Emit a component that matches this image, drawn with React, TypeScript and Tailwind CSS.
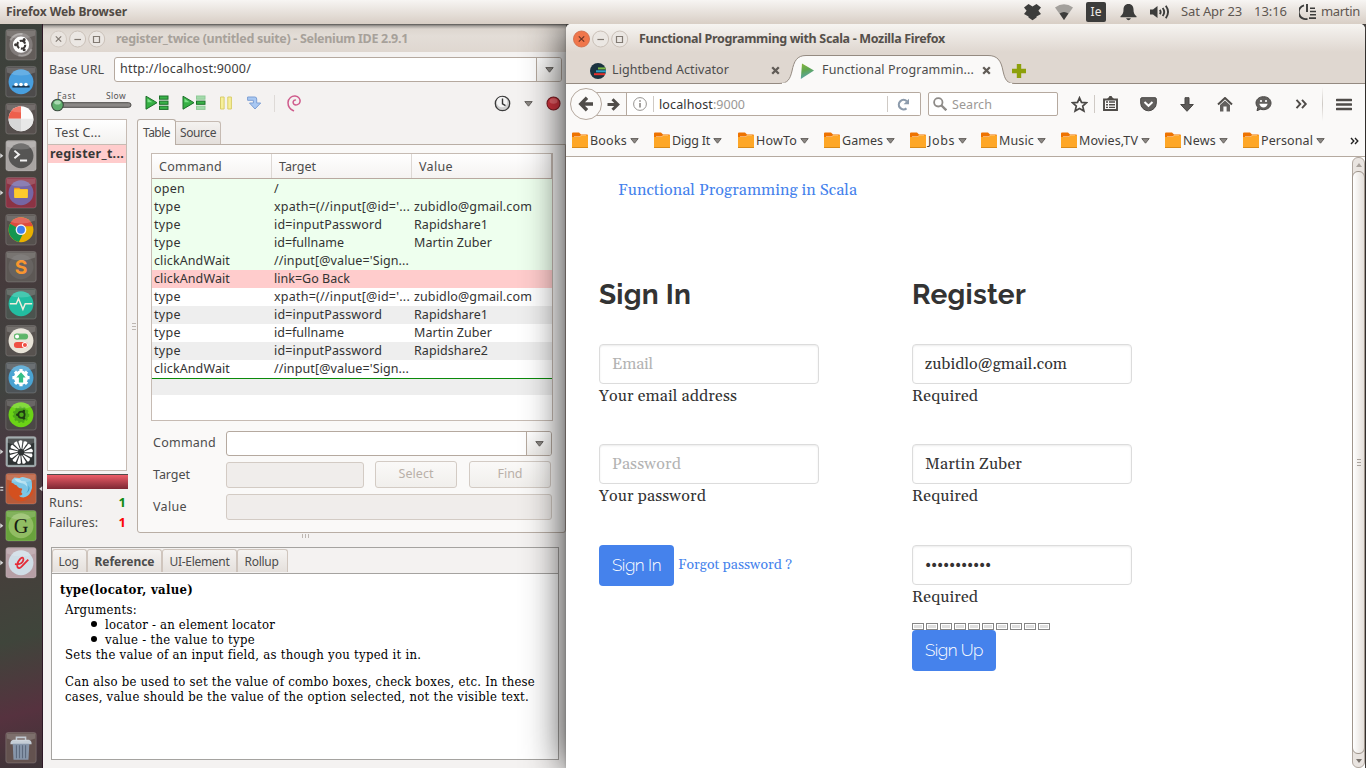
import React, { useLayoutEffect, useRef, useState } from "react";

const ui = "font-['Noto_Sans','Open_Sans',sans-serif]";

/* Text whose tracking is adjusted so that the run takes a known width. */
function Fit({ w, children, className = "" }: { w: number; children: string; className?: string }) {
  const ref = useRef<HTMLSpanElement>(null);
  const [ls, setLs] = useState(0);
  useLayoutEffect(() => {
    if (ref.current) {
      const natural = ref.current.getBoundingClientRect().width - ls * children.length;
      setLs((w - natural) / children.length);
    }
  }, [w, children]);
  return (
    <span ref={ref} style={{ letterSpacing: ls }} className={"inline-block shrink-0 whitespace-pre " + className}>
      {children}
    </span>
  );
}

function Caret({ className = "" }: { className?: string }) {
  return (
    <svg width="9" height="6" viewBox="0 0 9 6" className={"shrink-0 " + className}>
      <path d="M.8.6h7.4L4.5 5.2z" fill="#8d8985" stroke="#5a5754" strokeWidth=".9" />
    </svg>
  );
}

/* ---------- top panel ---------- */
function TopPanel() {
  return (
    <header className="flex h-6 shrink-0 items-center bg-linear-to-b from-[#f7f5f3] to-[#d8cec5] text-[13px] leading-6 text-[#5f5751]">
      <Fit w={121} className="ml-1.5 text-[12px] font-bold text-[#524b45]">Firefox Web Browser</Fit>
      <svg width="19" height="18" viewBox="0 0 19 18" className="ml-[896px]" fill="#3c3c3b">
        <path d="M5.500 1 9.500 3.600 13.500 1 18 4.400 15.400 7.700 18 11 13.500 13.600v1L9.500 17.300 5.500 14.600v-1L1 11 3.600 7.700 1 4.400z" />
      </svg>
      <svg width="20" height="18" viewBox="0 0 20 18" className="ml-[12px]">
        <path d="M1 4.600Q10-2.200 19 4.600L10 17z" fill="#a3a09c" />
        <path d="M5.600 10.600Q10 7.600 14.400 10.600L10 17z" fill="#3c3c3b" />
      </svg>
      <span className="ml-[12px] flex h-5 w-5 items-center justify-center rounded-[2px] bg-[#3c3c3b] text-[12px] text-[#eeeae6]">Ie</span>
      <svg width="17" height="18" viewBox="0 0 17 18" className="ml-[14px]" fill="#3c3c3b">
        <path d="M8.500 1c3.600 0 5 2.600 5 5.500 0 3.500.8 4.800 3 6.800v.9H.5v-.9c2.200-2 3-3.300 3-6.800C3.500 3.600 4.900 1 8.500 1z" />
        <path d="M6 15.200h5q-2.500 4-5 0z" />
      </svg>
      <svg width="22" height="16" viewBox="0 0 22 16" className="ml-[12px]" fill="none" stroke="#3c3c3b" strokeWidth="1.900">
        <path d="M1 5.500h3L8.500 2v12L4 10.500H1z" fill="#3c3c3b" stroke="none" />
        <path d="M10.800 5.800q1.700 2.200 0 4.400M13.700 4q3 4 0 8M16.800 1.800q4.500 6.200 0 12.400" />
      </svg>
      <Fit w={61} className="ml-[10px] -mt-[2px]">Sat Apr 23</Fit>
      <Fit w={33} className="ml-[12px] -mt-[2px]">13:16</Fit>
      <svg width="18" height="18" viewBox="0 0 18 18" className="ml-[12px]" fill="none" stroke="#3c3c3b" strokeWidth="1.900">
        <path d="M5 2.300A7 7 0 0 0 8.500 15.900M8 1v8" />
        <path d="M11 5.200h5M11 8.500h6M11 11.800h6M10 15.100h7" strokeWidth="1.600" />
      </svg>
      <Fit w={39} className="ml-[4px] -mt-[2px]">martin</Fit>
    </header>
  );
}

/* ---------- launcher ---------- */
function Gloss() {
  return <path d="M1.500 1.500h28v5q-14 6-28 0z" fill="#fff" opacity=".17" />;
}

const icons: { bg: string; arrow?: string; art: React.ReactNode }[] = [
  { bg: "#635d5a", art: (<>
    <circle cx="15.500" cy="15.500" r="11.500" fill="#8e8987" opacity=".7" />
    <path d="M5 11Q9 4 17 5M26 20q-4 8-13 6" stroke="#bdb9b7" strokeWidth="2" fill="none" opacity=".6" />
    <circle cx="15.500" cy="15.500" r="8" fill="#fff" />
    <circle cx="15.800" cy="15.500" r="3.900" fill="none" stroke="#3b3736" strokeWidth="2.100" strokeDasharray="6.400 1.770" />
    <circle cx="10.200" cy="15.500" r="1.500" fill="#3b3736" /><circle cx="18.600" cy="10.500" r="1.500" fill="#3b3736" /><circle cx="18.600" cy="20.500" r="1.500" fill="#3b3736" /></>) },
  { bg: "#4d4b4b", art: (<><circle cx="15.500" cy="15.500" r="12.300" fill="#489fdf" />
    <path d="M7 20.300h17" stroke="#1d3850" strokeWidth="2" />
    <g fill="#fff"><circle cx="10.600" cy="18.300" r="1.800" /><circle cx="15.500" cy="18.300" r="1.800" /><circle cx="20.400" cy="18.300" r="1.800" /></g></>) },
  { bg: "#57504e", art: (<><circle cx="15.500" cy="15.500" r="12.300" fill="#fbfbfb" />
    <path d="M15.500 15.500H3.200a12.300 12.300 0 0 1 12.300-12.300z" fill="#ee5f4c" />
    <path d="M15.500 15.500H3.200a12.300 12.300 0 0 0 12.300 12.300z" fill="#d7d7d7" />
    <path d="M15.500 15.500h12.300a12.300 12.300 0 0 1-12.300 12.300z" fill="#e8e8e8" /></>) },
  { bg: "#a8a4a2", arrow: "l", art: (<><circle cx="15.500" cy="15.500" r="12.300" fill="#565554" />
    <path d="M9 10.500l4.500 3.800L9 18.100M14.500 20.200h7" fill="none" stroke="#f2f2f2" strokeWidth="1.900" /></>) },
  { bg: "#8b3344", arrow: "l", art: (<><circle cx="15.500" cy="15.500" r="12.300" fill="#7566a4" />
    <path d="M8.700 10.500h5l1.500 1.700h7v3H8.700z" fill="#f39c1e" /><rect x="8.700" y="12" width="13.600" height="8.700" rx=".8" fill="#fecb2b" /></>) },
  { bg: "#55504d", art: (<><circle cx="15.500" cy="15.500" r="12.300" fill="#e8b000" />
    <path d="M15.500 15.500 4.600 9.800A12.300 12.300 0 0 1 27.200 12H15.500z" fill="#dd4b3e" />
    <path d="M15.500 15.500 4.700 9.600A12.300 12.300 0 0 0 13.400 27.600l5.200-10.300z" fill="#14964f" />
    <circle cx="15.500" cy="15.500" r="5.300" fill="#f4f4f4" /><circle cx="15.500" cy="15.500" r="3.900" fill="#3f80ee" /></>) },
  { bg: "#5d5855", art: (<><circle cx="15.500" cy="15.500" r="12.300" fill="#676361" />
    <text x="15.500" y="22.300" textAnchor="middle" fontSize="19" fontWeight="700" fill="#f8952f" fontFamily="Inter">S</text></>) },
  { bg: "#4b534e", art: (<><circle cx="15.500" cy="15.500" r="12.300" fill="#22bda1" />
    <path d="M4.500 15.500h6.300l2.200-5 4.400 10.600 2.300-5.600h6.800" fill="none" stroke="#f0eddc" strokeWidth="1.400" /></>) },
  { bg: "#57524f", art: (<><circle cx="15.500" cy="15.500" r="12.300" fill="#e8e4d8" />
    <rect x="8.500" y="8.300" width="14" height="6" rx="3" fill="#5db568" /><circle cx="11.600" cy="11.300" r="2.500" fill="#fff" stroke="#5db568" />
    <rect x="8.500" y="16.700" width="14" height="6" rx="3" fill="#ef5044" /><circle cx="19.400" cy="19.700" r="2.500" fill="#ef5044" stroke="#fff" /></>) },
  { bg: "#4d5357", art: (<><circle cx="15.500" cy="15.500" r="12.300" fill="#4aa3d2" />
    <g stroke="#fff" strokeWidth="3.200"><path d="M15.500 7v17M7 15.500h17M9.500 9.500l12 12M21.500 9.500l-12 12" /></g><circle cx="15.500" cy="15.500" r="7" fill="#fff" />
    <path d="M15.500 10.200l4.600 5h-2.500v5h-4.200v-5h-2.500z" fill="#35bf87" /></>) },
  { bg: "#4b4846", art: (<><circle cx="15.500" cy="15.500" r="12.300" fill="#6bd316" />
    <circle cx="15.500" cy="15.500" r="7.200" fill="#4ca71a" stroke="#4ca71a" strokeWidth="2" strokeDasharray="2 2" />
    <circle cx="16" cy="15.500" r="3.100" fill="none" stroke="#1e3b12" strokeWidth="1.700" />
    <g fill="#1e3b12"><circle cx="11.900" cy="15.500" r="1.300" /><circle cx="18.300" cy="11.900" r="1.300" /><circle cx="18.300" cy="19.100" r="1.300" /></g></>) },
  { bg: "#9aa5a7", arrow: "l", art: (<><rect x="2.500" y="2.500" width="26" height="26" fill="#2f3334" />
    <g fill="#fff">{[0, 1, 2, 3, 4, 5, 6, 7, 8, 9, 10, 11, 12].map((i) => (
      <path key={i} d="M15.200 12.500 13 5.500q2-2.300 3.800-.7l-.8 8z" transform={"rotate(" + i * 27.7 + " 15.5 16)"} />
    ))}</g><circle cx="15.500" cy="16" r="2.500" fill="#2f3334" /></>) },
  { bg: "#b85a39", arrow: "b", art: (<><circle cx="15.500" cy="15.500" r="12.300" fill="#d4501f" />
    <path d="M6 9.500Q6.500 6 9 4.500L14 5q3-2 5.500-.5l5 1.500q2 1.500 1.800 4 .7 4.500-1 8-2 5.300-7.500 6.300-3.300 0-4.300-1.800 2.600 0 3.500-1.700-2-1.300-1-3.300 1-1.300.5-2.200-3 .2-4.300-1.600l-1.200-1.600q-2-.2-2.500-1.600z" fill="#7cc6e6" />
    <path d="M9 6q5-1 7 2l4 .5q2 2 1.500 5Q19 10 16 10q-4 0-7-4z" fill="#b4e0f0" />
    <path d="M20.500 20q2.800-3 2.500-8 2.500 5-2.500 8z" fill="#3f9cc6" /></>) },
  { bg: "#69a33c", arrow: "l", art: (<><circle cx="15.500" cy="15.500" r="12.300" fill="#91bd63" />
    <text x="15.500" y="22.300" textAnchor="middle" fontSize="20" fill="#171c12" fontFamily="Liberation Serif">G</text></>) },
  { bg: "#b69fa5", arrow: "l", art: (<><circle cx="15.500" cy="15.500" r="12.300" fill="#cfdde6" />
    <path d="M9.500 17q7.500.8 8.400-4.500 0-3.500-3.200-.8-3.800 4.500-2.700 8 1.500 2.600 4.500-.7l6.200-6.500" fill="none" stroke="#e42c38" strokeWidth="1.800" /></>) },
  { bg: "#63524f", art: (<>
    <path d="M11 8V5.300h9V8" fill="none" stroke="#b6bfc9" strokeWidth="1.500" />
    <path d="M5 12q0-4 3-4.300h15q3 .3 3 4.300z" fill="#c4cdd6" /><path d="M7.300 11.500h16.400l-.8 16H8.100z" fill="#8796aa" />
    <path d="M11 13v13M14 13v13M17 13v13M20 13v13" stroke="#5e6b7f" strokeWidth="1.100" /></>) },
];

function Launcher() {
  return (
    <nav className="flex w-[43px] shrink-0 flex-col gap-1.5 border-r border-[#2e1826] bg-[linear-gradient(165deg,#3a403a_0%,#47443f_20%,#46393b_32%,#404440_48%,#4b3842_58%,#463f3b_72%,#3f453b_82%,#56323f_92%,#3d3437_100%)] pb-[5px] pl-[5px] pt-[5px]">
      {icons.map((ic, i) => (
        <div key={i} className={"h-[31px] w-[32px] shrink-0 " + (i === 15 ? "mt-auto" : "")}>
          <svg width="32" height="32" viewBox="-.3 0 31.600 31.600" className="block overflow-visible">
            <rect x=".5" y=".5" width="30" height="30" rx="2.500" fill={ic.bg} stroke="#ffffff" strokeOpacity=".16" />
            {ic.art}
            <Gloss />
            {ic.arrow === "l" && <path d="M-5 13v5l3-2.500z" fill="#d8d8d8" />}
            {ic.arrow === "b" && <path d="M-5 13.500h3v1.200h-3zM-5 16.300h3v1.200h-3zM36.500 13v5l-3-2.500z" fill="#d8d8d8" />}
          </svg>
        </div>
      ))}
    </nav>
  );
}

/* ---------- window buttons ---------- */
function WinButtons({ active }: { active?: boolean }) {
  const s = "#817a73";
  return (
    <svg width="56" height="18" viewBox="0 0 56 18" className="ml-px mt-px shrink-0" fill="none" stroke={s} strokeWidth="1.200">
      <circle cx="8.500" cy="9" r="8" fill={active ? "#f0764b" : "#e9e4df"} stroke={active ? "#cf7150" : "#cfc6be"} strokeWidth=".9" />
      <circle cx="27.600" cy="9" r="8" fill="#ebe7e3" stroke="#c6bcb3" strokeWidth=".9" />
      <circle cx="46.700" cy="9" r="8" fill="#ebe7e3" stroke="#c6bcb3" strokeWidth=".9" />
      <path d="M5.800 6.300l5.400 5.400m0-5.400-5.400 5.400" stroke={active ? "#6b3526" : s} />
      <path d="M24.400 9.500h6.600" />
      <path d="M43.500 6.500h6v6h-6z" />
    </svg>
  );
}

/* ---------- Selenium window ---------- */
const steps: [string, string, number, string, number, number, string][] = [
  ["open", "/", 31, "", 5, 0, "bg-[#eeffee]"],
  ["type", "xpath=(//input[@id='...", 27, "zubidlo@gmail.com", 136, 118, "bg-[#eeffee]"],
  ["type", "id=inputPassword", 27, "Rapidshare1", 108, 74, "bg-[#eeffee]"],
  ["type", "id=fullname", 27, "Martin Zuber", 70, 78, "bg-[#eeffee]"],
  ["clickAndWait", "//input[@value='Sign...", 76, "", 135, 0, "bg-[#eeffee]"],
  ["clickAndWait", "link=Go Back", 76, "", 76, 0, "bg-[#ffcccc]"],
  ["type", "xpath=(//input[@id='...", 27, "zubidlo@gmail.com", 136, 118, "bg-white"],
  ["type", "id=inputPassword", 27, "Rapidshare1", 108, 74, "bg-[#eeeeee]"],
  ["type", "id=fullname", 27, "Martin Zuber", 70, 78, "bg-white"],
  ["type", "id=inputPassword", 27, "Rapidshare2", 108, 74, "bg-[#eeeeee]"],
  ["clickAndWait", "//input[@value='Sign...", 76, "", 135, 0, "bg-white"],
];

function Combo({ text, className }: { text?: string; className: string }) {
  return (
    <div className={"flex h-[25px] items-center rounded-[3px] border border-[#b5a99f] bg-white " + className}>
      <div className="flex flex-1 pl-[5px] text-[#3c3c3c]">{text && <Fit w={131}>{text}</Fit>}</div>
      <div className="flex h-full w-[25px] items-center justify-center rounded-r-[2px] border-l border-[#b5a99f] bg-linear-to-b from-white to-[#efedea] pt-px"><Caret /></div>
    </div>
  );
}

function PlayList({ faded }: { faded?: boolean }) {
  return (
    <svg width="24" height="16" viewBox="0 0 24 16" className="shrink-0">
      <path d="M1 1.200v13L12 7.700z" fill="#36b044" stroke="#1c702a" />
      <path d="M2.500 3.600v3.600h5z" fill="#7be086" />
      <g fill={faded ? "#a3dbab" : "#39b248"} stroke={faded ? "#8fca97" : "#1c702a"}>
        <rect x="14.500" y="1" width="8.500" height="3.200" />
        <rect x="14.500" y="6.100" width="8.500" height="3.200" fill="#39b248" stroke="#1c702a" />
        <rect x="14.500" y="11.200" width="8.500" height="3.200" />
      </g>
    </svg>
  );
}

function Toolbar() {
  return (
    <div className="flex h-[37px] items-center pl-[8px] pt-[5px]">
      <div className="h-[24px] w-[80px] shrink-0 text-[8.500px] leading-[9px] text-[#555]">
        <div className="flex justify-between pl-[6px] pr-[5px]"><Fit w={19}>Fast</Fit><Fit w={20}>Slow</Fit></div>
        <svg width="82" height="14" viewBox="0 0 82 14" className="-mt-[2px] block">
          <rect x="3" y="4.700" width="77" height="4.600" rx="2.300" fill="#8b8886" stroke="#4d4b49" />
          <circle cx="6.500" cy="7" r="5.800" fill="#5fae6c" stroke="#3a4a3d" strokeWidth="1.100" />
          <ellipse cx="6.500" cy="4.600" rx="3.300" ry="2" fill="#a9d9b0" />
        </svg>
      </div>
      <div className="ml-[14px] flex items-center">
        <PlayList /><div className="w-[13px]" /><PlayList faded />
        <svg width="13" height="14" viewBox="0 0 13 14" className="ml-[14px]" fill="#f7f09a" stroke="#d9cd6a"><path d="M.5 1h3.600v12H.5zM7.800 1h3.600v12H7.800z" /></svg>
        <svg width="15" height="14" viewBox="0 0 15 14" className="ml-[14px]" fill="#a9c8f2" stroke="#7d9fd4"><path d="M.6 1h7.200q1.900 0 1.900 2v4h4L8 13 2.500 7h3.900V4.300H.6z" /></svg>
        <div className="ml-[12px] h-[17px] w-px bg-[#dedad7]" />
        <svg width="15" height="17" viewBox="0 0 15 17" className="ml-[12px]" fill="none" stroke="#cf5b8c" strokeLinecap="round">
          <path d="M6.500 15.800C2.500 14 1 11 1 7.800 1.200 3 5 .8 8.200 1.100c3.600.3 5.300 3.200 4.800 5.700-.5 2.800-4.200 4-6.200 2.300-1.400-1.500-.6-3.900 1.600-4" strokeWidth="1.500" />
        </svg>
      </div>
      <svg width="17" height="17" viewBox="0 0 17 17" className="ml-[192px]">
        <circle cx="8.500" cy="8.500" r="7.200" fill="#cfcfcf" stroke="#3b3b3b" strokeWidth="1.300" /><circle cx="8" cy="7" r="5.300" fill="#f5f5f5" />
        <path d="M8.500 3.500v5.300l3 1.800" stroke="#333" strokeWidth="1.400" fill="none" />
      </svg>
      <Caret className="ml-[13px] mt-0.5" />
      <svg width="15" height="15" viewBox="0 0 15 15" className="ml-[13px] shrink-0"><circle cx="7.500" cy="7.500" r="6.500" fill="#d3343e" stroke="#7d1a20" strokeWidth="1.100" /><ellipse cx="7.500" cy="5" rx="4" ry="2.700" fill="#e9646b" /></svg>
    </div>
  );
}

function SeleniumWindow() {
  return (
    <section className="flex w-[523px] shrink-0 flex-col bg-[#f4f2f1] text-[12.500px] text-[#4c4c4c]">
      <div className="flex h-7 shrink-0 items-center bg-[linear-gradient(#555350_0px,#a8a39e_2px,#ddd6cf_5px,#e3ddd7_12px,#dfd7d0_28px)] pl-[6px]">
        <WinButtons />
        <Fit w={292} className="ml-[10px] mt-[2px] text-[12.500px] font-bold text-[#a7a19a]">register_twice (untitled suite) - Selenium IDE 2.9.1</Fit>
      </div>
      <div className="flex h-[30px] items-end pl-1.5">
        <div className="w-[65px] pb-[2px]"><Fit w={55}>Base URL</Fit></div>
        <Combo text="http://localhost:9000/" className="w-[448px]" />
      </div>
      <Toolbar />
      <div className="flex h-[414px] shrink-0">
        <div className="ml-1 w-[81px] shrink-0">
          <div className="h-[352px] w-20 border border-[#c6bbb3] bg-white">
            <div className="flex h-[25px] items-center border-b border-[#c6bbb3] bg-linear-to-b from-white to-[#f3f1ef] pl-[7px] pt-0.5"><Fit w={46}>Test C...</Fit></div>
            <div className="flex h-[18px] items-center overflow-hidden bg-[#ffcccc] pl-[2px] text-[#383838]"><Fit w={74} className="font-bold">register_t...</Fit></div>
          </div>
          <div className="mt-[3px] h-[15px] border-t border-[#4f4a4a] bg-linear-to-b from-[#ee5d68] to-[#7e2834]" />
          <div className="mt-[4px] flex h-5 items-center justify-between pl-[2px] pr-0.5"><Fit w={34}>Runs:</Fit><b className="text-[13px] text-[#108a10]">1</b></div>
          <div className="flex h-5 items-center justify-between pl-[2px] pr-0.5"><Fit w={49}>Failures:</Fit><b className="text-[13px] text-[#fb0505]">1</b></div>
        </div>
        <div className="flex w-[9px] shrink-0 flex-col items-end gap-[2px] pr-px pt-[204px]">
          <i className="h-px w-1 bg-[#bdb7b2]" /><i className="h-px w-1 bg-[#bdb7b2]" /><i className="h-px w-1 bg-[#bdb7b2]" />
        </div>
        <div className="flex w-[429px] shrink-0 flex-col">
          <div className="relative z-10 -mb-px flex h-[26px] items-end">
            <div className="flex h-[26px] w-[39px] items-center justify-center rounded-t-[3px] border border-b-0 border-[#b9aea5] bg-[#faf9f8] text-[12px]"><Fit w={27}>Table</Fit></div>
            <div className="mb-px flex h-[23px] w-[45px] items-center justify-center rounded-tr-[3px] border border-b-0 border-l-0 border-[#c6bbb3] bg-linear-to-b from-[#f4f2f0] to-[#e4dfdb] text-[12px]"><Fit w={36}>Source</Fit></div>
          </div>
          <div className="flex-1 rounded-b-[3px] border border-[#b9aea5] bg-[#faf9f8] pl-[13px] pt-[8px]">
            <div className="h-[268px] w-[402px] border border-[#c6bbb3] bg-white">
              <div className="flex h-[25px] border-b border-[#b9a9a0] bg-linear-to-b from-white to-[#f5f3f1]">
                <div className="flex w-[120px] items-center border-r border-[#ddd8d4] pl-[7px] pt-0.5"><Fit w={63}>Command</Fit></div>
                <div className="flex w-[140px] items-center border-r border-[#ddd8d4] pl-[7px] pt-0.5"><Fit w={37}>Target</Fit></div>
                <div className="flex flex-1 items-center border-r border-[#c6bbb3] pl-[7px] pt-0.5"><Fit w={34}>Value</Fit></div>
              </div>
              {steps.map((r, i) => (
                <div key={i} className={"flex items-center text-[#333] " + (i === 0 ? "h-[19px] pt-0.5 " : "h-[18px] ") + r[6]}>
                  <div className="flex w-[120px] pl-[2px]"><Fit w={r[2]}>{r[0]}</Fit></div>
                  <div className="flex w-[140px] pl-[2px]"><Fit w={r[4]}>{r[1]}</Fit></div>
                  <div className="flex flex-1 pl-[2px]">{r[3] && <Fit w={r[5]}>{r[3]}</Fit>}</div>
                </div>
              ))}
              <div className="h-[17px] border-t border-[#0a8a0a] bg-[#eeeeee]" />
            </div>
            <div className="mt-[10px] flex h-[25px]"><div className="w-[75px] pl-0.5 pt-[3px]"><Fit w={63}>Command</Fit></div><Combo className="w-[326px]" /></div>
            <div className="mt-[5px] flex h-[27px]">
              <div className="w-[75px] pl-0.5 pt-[5px]"><Fit w={37}>Target</Fit></div>
              <div className="mt-px h-[26px] w-[138px] rounded-[3px] border border-[#d3cbc4] bg-[#f0edeb]" />
              <div className="ml-[11px] flex w-[82px] items-center justify-center rounded-[3px] border border-[#d3cbc4] bg-linear-to-b from-[#faf9f8] to-[#f1efec] text-[#b9b0a8]"><Fit w={35}>Select</Fit></div>
              <div className="ml-[12px] flex w-[82px] items-center justify-center rounded-[3px] border border-[#d3cbc4] bg-linear-to-b from-[#faf9f8] to-[#f1efec] text-[#b9b0a8]"><Fit w={25}>Find</Fit></div>
            </div>
            <div className="mt-[6px] flex h-[26px]"><div className="w-[75px] pl-0.5 pt-[4px]"><Fit w={34}>Value</Fit></div><div className="w-[326px] rounded-[3px] border border-[#d3cbc4] bg-[#f0edeb]" /></div>
          </div>
        </div>
      </div>
      <div className="flex h-[14px] shrink-0 justify-center gap-[2px] pl-0.5 pt-px"><i className="h-1 w-px bg-[#bdb7b2]" /><i className="h-1 w-px bg-[#bdb7b2]" /><i className="h-1 w-px bg-[#bdb7b2]" /></div>
      <div className="ml-2 h-[213px] w-[508px] shrink-0 border border-[#a5a3a0] bg-white">
        <div className="flex h-[26px] items-start border-b border-[#a5a3a0] bg-[#f4f2f1] pt-px text-[12px]">
          <div className="flex h-[23px] w-[35px] items-center justify-center rounded-t-[3px] border border-b-0 border-[#cfc5bd] bg-linear-to-b from-[#f5f3f1] to-[#e5e0dc] pt-px pr-0.5"><Fit w={20}>Log</Fit></div>
          <div className="flex h-[23px] w-[75px] items-center justify-center rounded-t-[3px] border border-b-0 border-[#cfc5bd] bg-linear-to-b from-[#f5f3f1] to-[#e5e0dc] pt-px font-bold"><Fit w={60}>Reference</Fit></div>
          <div className="flex h-[23px] w-[75px] items-center justify-center rounded-t-[3px] border border-b-0 border-[#cfc5bd] bg-linear-to-b from-[#f5f3f1] to-[#e5e0dc] pt-px"><Fit w={60}>UI-Element</Fit></div>
          <div className="flex h-[23px] w-[51px] items-center justify-center rounded-t-[3px] border border-b-0 border-[#cfc5bd] bg-linear-to-b from-[#f5f3f1] to-[#e5e0dc] pt-px pr-0.5"><Fit w={34}>Rollup</Fit></div>
        </div>
        <div className="pl-[13px] pt-[8px] text-[13px] leading-[15px] text-black font-['DejaVu_Serif_Condensed','DejaVu_Serif',serif] [font-stretch:condensed]">
          <div className="-ml-[5px] h-[15px]"><Fit w={133} className="text-[13px] font-bold">type(locator, value)</Fit></div>
          <div className="mt-[5px] h-[15px]"><Fit w={72}>Arguments:</Fit></div>
          <div className="flex h-[15px] items-center pl-[26px]"><i className="mb-0.5 mr-[8px] h-1.5 w-1.5 rounded-full bg-black" /><Fit w={170}>locator - an element locator</Fit></div>
          <div className="flex h-[15px] items-center pl-[26px]"><i className="mb-0.5 mr-[8px] h-1.5 w-1.5 rounded-full bg-black" /><Fit w={150}>value - the value to type</Fit></div>
          <div className="h-[15px]"><Fit w={356}>Sets the value of an input field, as though you typed it in.</Fit></div>
          <div className="mt-[12px] h-[15px]"><Fit w={470}>Can also be used to set the value of combo boxes, check boxes, etc. In these</Fit></div>
          <div className="h-[15px]"><Fit w={464}>cases, value should be the value of the option selected, not the visible text.</Fit></div>
        </div>
      </div>
    </section>
  );
}

/* ---------- Firefox window ---------- */
const bookmarks: [string, number, number][] = [
  ["Books", 37, 82], ["Digg It", 38, 84], ["HowTo", 41, 86], ["Games", 41, 86], ["Jobs", 27, 71],
  ["Music", 35, 80], ["Movies,TV", 59, 104], ["News", 33, 78], ["Personal", 52, 100],
];

function Folder() {
  return (
    <svg width="16" height="17" viewBox="0 0 16 17" className="shrink-0">
      <path d="M0 1.500Q0 .5 1 .5h6l2 2h6q1 0 1 1V8H0z" fill="#ee7300" />
      <path d="M2 4.500h5.500L9.300 3H14v2H2z" fill="#fff" opacity=".85" />
      <path d="M0 5h7.500l2-1.700H16V16H0z" fill="#fea727" /><path d="M0 15.500h16" stroke="#d98a18" />
    </svg>
  );
}

function CloseX() {
  return <svg width="9" height="9" viewBox="0 0 9 9" className="shrink-0"><path d="M1.200 1.200l6.600 6.600m0-6.600L1.200 7.800" stroke="#605b56" strokeWidth="2.300" /></svg>;
}

function TabStrip() {
  return (
    <div className="relative flex h-[32px] shrink-0 items-center bg-[#dfd7d0] text-[12.500px] text-[#4c4c4c]">
      <svg width="799" height="32" viewBox="0 0 799 32" className="absolute left-0 top-0">
        <path d="M0 31.500H213C222 31.500 224 27 226 19 228 9 231 3.500 240 3.500H422C431 3.500 435 8 437 19 439 28 441 31.500 449 31.500H799" fill="#faf9f8" stroke="#948a81" />
        <path d="M216 31.500h230" stroke="#faf9f8" strokeWidth="1.500" />
      </svg>
      <div className="relative flex items-center pt-[5px]">
        <svg width="16" height="16" viewBox="0 0 16 16" className="ml-[24px]">
          <circle cx="8" cy="8" r="8" fill="#1b3340" /><path d="M8 5.400h7.500" stroke="#7cbb45" strokeWidth="2" /><path d="M6 8.300h10" stroke="#2e9fc4" strokeWidth="2" /><path d="M4 11.200h11" stroke="#e6322e" strokeWidth="2" />
        </svg>
        <Fit w={117} className="ml-[6px]">Lightbend Activator</Fit>
        <div className="w-[42px]" /><CloseX />
        <svg width="14" height="16" viewBox="0 0 14 16" className="ml-[20px]"><defs><linearGradient id="pl" x2=".3" y2="1"><stop stopColor="#87b53e" /><stop offset=".5" stopColor="#5fa651" /><stop offset="1" stopColor="#5aa3b0" /></linearGradient></defs><path d="M2 .5 14 7.500.8 16z" fill="url(#pl)" /></svg>
        <Fit w={152} className="ml-[8px]">Functional Programmin...</Fit>
        <div className="w-[8px]" /><CloseX />
        <svg width="14" height="14" viewBox="0 0 14 14" className="ml-[21px]"><path d="M7 0v14M0 7h14" stroke="#8da00b" strokeWidth="4.400" /></svg>
      </div>
    </div>
  );
}

function NavBar() {
  return (
    <div className="flex h-[40px] shrink-0 items-center bg-[#faf9f8]">
      <div className="relative z-10 ml-1 h-8 w-8 shrink-0 rounded-full border border-[#b5a99f] bg-[#fbfaf9] p-[7px]">
        <svg width="16" height="16" viewBox="0 0 16 16" fill="none" stroke="#4f4c49" strokeWidth="3.400"><path d="M15 8H4M9 1.800 2.800 8 9 14.200" /></svg>
      </div>
      <div className="-ml-2 flex h-[24px] w-[327px] shrink-0 items-center rounded-r-[2px] border border-l-0 border-[#b5a99f] bg-white text-[12.500px] text-[#333]">
        <div className="flex h-full w-[33px] items-center justify-end border-r border-[#b5a99f] bg-[#faf9f8] pr-1.5">
          <svg width="13" height="13" viewBox="0 0 13 13" fill="none" stroke="#4f4c49" strokeWidth="3"><path d="M.5 6.500H9M5.500 1.200l5.300 5.300-5.300 5.300" /></svg>
        </div>
        <svg width="14" height="14" viewBox="0 0 14 14" className="ml-[6px]" fill="none" stroke="#8b8885"><circle cx="7" cy="7" r="6.400" strokeWidth=".9" /><path d="M7 6v4.500M7 3.300v1.500" strokeWidth="1.600" /></svg>
        <div className="ml-[6px] h-4 w-px bg-[#cfcac5]" />
        <Fit w={54} className="ml-[5px] mt-0.5">localhost</Fit><Fit w={32} className="mt-0.5 text-[#9a9896]">:9000</Fit>
        <div className="ml-[142px] h-4 w-px bg-[#cfcac5]" />
        <svg width="13" height="13" viewBox="0 0 13 13" className="ml-[9px]" fill="none" stroke="#8c9bac" strokeWidth="2.200"><path d="M9.500 10.300A4.700 4.700 0 1 1 9.800 3.200" /><path d="M12 .8v5.400H6.600z" fill="#8c9bac" stroke="none" /></svg>
      </div>
      <div className="ml-[7px] flex h-[24px] w-[130px] shrink-0 items-center rounded-[2px] border border-[#b5a99f] bg-white text-[12.500px] text-[#9b9895]">
        <svg width="14" height="14" viewBox="0 0 14 14" className="ml-1" fill="none" stroke="#8e8b88"><circle cx="5.300" cy="5.300" r="4.200" strokeWidth="1.800" /><path d="M8.500 8.500l4.800 4.800" strokeWidth="2.400" /></svg>
        <Fit w={40} className="ml-[5px] mt-0.5">Search</Fit>
      </div>
      <svg width="17" height="17" viewBox="0 0 17 17" className="ml-[13px] shrink-0"><path d="M8.500 1.800l2 4.600 5 .4-3.800 3.300 1.200 4.900-4.400-2.600-4.400 2.600 1.200-4.900L1.500 6.800l5-.4z" fill="none" stroke="#4a4846" strokeWidth="1.700" /></svg>
      <div className="ml-[6px] h-[18px] w-px shrink-0 bg-[#cfcac5]" />
      <svg width="15" height="16" viewBox="0 0 15 16" className="ml-[8px] shrink-0"><path d="M1 3.500h13V14H1z" fill="#faf9f8" stroke="#4f4c49" strokeWidth="1.900" /><path d="M5 3V2h1.500V.5h2V2H10v1z" fill="#4f4c49" stroke="#4f4c49" /><path d="M3 6h2M6 6h6M3 8.700h2M6 8.700h6M3 11.400h2M6 11.400h6" stroke="#4f4c49" strokeWidth="1.400" /></svg>
      <svg width="17" height="15" viewBox="0 0 17 15" className="ml-[22px] shrink-0"><path d="M2 .7h13q1.300 0 1.300 1.300v4a7.800 7.800 0 0 1-15.600 0V2Q.7.7 2 .7z" fill="#62605e" stroke="#484644" /><path d="M4.500 5l4 3.800 4-3.800" fill="none" stroke="#fff" strokeWidth="2" /></svg>
      <svg width="14" height="15" viewBox="0 0 14 15" className="ml-[23px] shrink-0"><path d="M5 .7h4v6.800h4.300L7 14.300.7 7.500H5z" fill="#5d5b59" stroke="#484644" /></svg>
      <svg width="16" height="15" viewBox="0 0 16 15" className="ml-[23px] shrink-0"><path d="M1 7.500 8 1l7 6.500" fill="none" stroke="#4f4c49" strokeWidth="2" /><path d="M3 8l5-4.500L13 8v6.500H9.600V9.500H6.400v5H3z" fill="#62605e" /></svg>
      <svg width="17" height="16" viewBox="0 0 17 16" className="ml-[22px] shrink-0"><path d="M8.500.7c4.500 0 7.500 2.800 7.500 6.400s-3 6.600-7.500 6.600q-1.800 0-3-.5L2 14.700l.8-3.400Q1 9.600 1 7.100C1 3.500 4 .7 8.500.7z" fill="#62605e" stroke="#484644" /><circle cx="6" cy="5" r="1.100" fill="#fff" /><circle cx="11" cy="5" r="1.100" fill="#fff" /><path d="M4.300 7.800h8.400q-1 3.600-4.200 3.600T4.300 7.800z" fill="#fff" /></svg>
      <svg width="13" height="10" viewBox="0 0 13 10" className="ml-[23px] shrink-0" fill="none" stroke="#4f4c49" strokeWidth="1.900"><path d="M1.500.8 5.300 5 1.500 9.200M7 .8 10.800 5 7 9.200" /></svg>
      <div className="ml-[14px] h-[34px] w-px shrink-0 bg-linear-to-b from-[#faf9f8] via-[#cfcac5] to-[#faf9f8]" />
      <svg width="16" height="13" viewBox="0 0 16 13" className="ml-[13px] shrink-0"><path d="M1 2h14M1 6.500h14M1 11h14" stroke="#4f4c49" strokeWidth="2.600" strokeLinecap="round" /></svg>
    </div>
  );
}

function Field({ text, w, hint, hw, placeholder, className = "" }: { text: string; w: number; hint: string; hw: number; placeholder?: boolean; className?: string }) {
  return (
    <div className={className}>
      <div className={"flex h-[40px] w-[220px] items-center rounded-[4px] border border-[#dcdcdc] bg-white pl-[12px] shadow-[inset_0_1px_2px_rgba(0,0,0,0.08)] " + (placeholder ? "text-[#b3b3b3]" : "text-[#333]")}>
        <Fit w={w}>{text}</Fit>
      </div>
      <div className="h-6 leading-6"><Fit w={hw}>{hint}</Fit></div>
    </div>
  );
}

function FirefoxWindow() {
  return (
    <section className="relative z-20 flex w-[799px] shrink-0 flex-col rounded-t-[5px] bg-white shadow-[0_0_3px_rgba(0,0,0,0.2),0_0_40px_rgba(0,0,0,0.85)]">
      <div className="flex h-[28px] shrink-0 items-center rounded-t-[5px] bg-linear-to-b from-[#f6f4f1] to-[#dfd7d0] pl-[6px]">
        <WinButtons active />
        <Fit w={306} className="ml-[10px] mt-[2px] text-[12.500px] font-bold text-[#55504b]">Functional Programming with Scala - Mozilla Firefox</Fit>
      </div>
      <TabStrip />
      <NavBar />
      <div className="flex h-[33px] shrink-0 items-center border-b border-[#b5aaa0] bg-[#faf9f8] pl-1.5 text-[12.500px] text-[#3f3d3b]">
        {bookmarks.map((b) => (
          <div key={b[0]} className="flex shrink-0 items-center" style={{ width: b[2] }}>
            <Folder /><Fit w={b[1]} className="ml-[2px] mr-[3px] mt-[2px]">{b[0]}</Fit><Caret className="mt-0.5" />
          </div>
        ))}
        <svg width="9" height="8" viewBox="0 0 9 8" className="ml-[7px] mt-px shrink-0" fill="none" stroke="#222" strokeWidth="1.400"><path d="M1 1l2.800 3L1 7M5 1l2.800 3L5 7" /></svg>
      </div>
      <div className="flex min-h-0 flex-1">
        <main className="flex-1 pl-[33px] text-[16px] text-[#333] font-['Gelasio','Liberation_Serif',serif]">
          <div className="h-[65px] pl-[19px] pt-[21px] leading-6 text-[#4582ec]"><Fit w={239}>Functional Programming in Scala</Fit></div>
          <div className="grid grid-cols-[313px_1fr] pt-[57px]">
            <div>
              <h2 className="h-[65px] text-[28px] leading-8 font-bold font-['Raleway','Lato',sans-serif]"><Fit w={92}>Sign In</Fit></h2>
              <Field text="Email" w={41} hint="Your email address" hw={138} placeholder />
              <Field text="Password" w={69} hint="Your password" hw={107} placeholder className="mt-[36px]" />
              <div className="mt-[37px] flex items-center text-[14px] text-[#4582ec]">
                <div className="mr-1 flex h-[41px] w-[75px] items-center justify-center rounded-[4px] bg-[#4582ec] text-[17px] text-white font-['Raleway','Lato',sans-serif] font-light"><Fit w={49}>Sign In</Fit></div>
                <Fit w={114}>Forgot password ?</Fit>
              </div>
            </div>
            <div>
              <h2 className="h-[65px] text-[28px] leading-8 font-bold font-['Raleway','Lato',sans-serif]"><Fit w={114}>Register</Fit></h2>
              <Field text="zubidlo@gmail.com" w={142} hint="Required" hw={66} />
              <Field text="Martin Zuber" w={97} hint="Required" hw={66} className="mt-[36px]" />
              <Field text="•••••••••••" w={66} hint="Required" hw={66} className="mt-[37px]" />
              <div className="mt-[14px] flex gap-[2px]">
                {[0, 1, 2, 3, 4, 5, 6, 7, 8, 9].map((i) => (
                  <div key={i} className="h-[7px] w-[12px] border border-[#858585] bg-white p-px"><div className="h-full bg-[#dedede]" /></div>
                ))}
              </div>
              <div className="flex h-[41px] w-[84px] items-center justify-center rounded-[4px] bg-[#4582ec] text-[17px] text-white font-['Raleway','Lato',sans-serif] font-light"><Fit w={58}>Sign Up</Fit></div>
            </div>
          </div>
        </main>
        <div className="flex w-[13px] flex-col rounded-[6px] border border-[#b0a79f] bg-[#e9e4e0]">
          <div className="flex h-[13px] items-center justify-center"><svg width="6" height="4" viewBox="0 0 6 4"><path d="M0 4h6L3 0z" fill="#aaa39d" /></svg></div>
          <div className="-mx-px flex flex-1 flex-col items-center justify-center gap-[2px] rounded-[6px] border border-[#9f958c] bg-linear-to-r from-white to-[#e4dfda]">
            <i className="h-px w-1 bg-[#aaa39d]" /><i className="h-px w-1 bg-[#aaa39d]" /><i className="h-px w-1 bg-[#aaa39d]" />
          </div>
          <div className="flex h-[13px] items-center justify-center"><svg width="6" height="4" viewBox="0 0 6 4"><path d="M0 0h6L3 4z" fill="#77716b" /></svg></div>
        </div>
      </div>
    </section>
  );
}

export default function App() {
  return (
    <div className={"flex h-[768px] w-[1366px] flex-col overflow-hidden bg-[#5b5652] " + ui}>
      <TopPanel />
      <div className="flex min-h-0 flex-1 overflow-hidden">
        <Launcher />
        <SeleniumWindow />
        <FirefoxWindow />
      </div>
    </div>
  );
}
